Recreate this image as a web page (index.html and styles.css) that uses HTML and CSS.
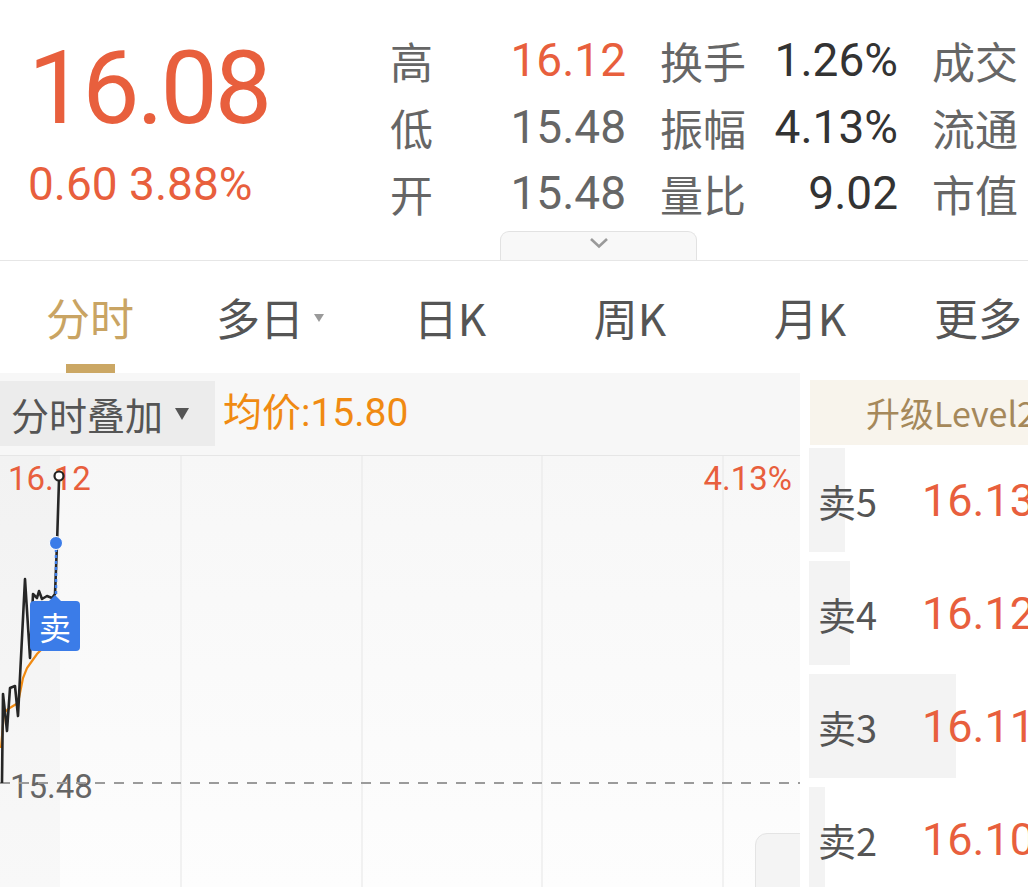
FILE: index.html
```html
<!DOCTYPE html>
<html lang="zh-CN">
<head>
  <meta charset="UTF-8" />
  <meta name="viewport" content="width=device-width, initial-scale=1.0"/>
  <title>分时</title>
  <link rel="stylesheet" href="styles.css">
</head>
<body>
  <section class="quote">
    <div class="quote-main">
      <div class="price-block">
        <div class="last up">16.08</div>
        <div class="change up">0.60 3.88%</div>
      </div>
      <div class="stats">
        <span class="lbl">高</span><span class="val up">16.12</span>
        <span class="lbl pad">换手</span><span class="val dark">1.26%</span>
        <span class="lbl pad">成交</span>

        <span class="lbl">低</span><span class="val">15.48</span>
        <span class="lbl pad">振幅</span><span class="val dark">4.13%</span>
        <span class="lbl pad">流通</span>

        <span class="lbl">开</span><span class="val">15.48</span>
        <span class="lbl pad">量比</span><span class="val dark">9.02</span>
        <span class="lbl pad">市值</span>
      </div>
    </div>
    <div class="expand">
      <svg width="20" height="12" viewBox="0 0 20 12"><path d="M2 2 L10 9.5 L18 2" fill="none" stroke="#9a9a9a" stroke-width="2.6"/></svg>
    </div>
  </section>

  <nav class="tabs">
    <div class="tab active"><span class="tab-label">分时</span></div>
    <div class="tab"><span class="tab-label">多日<i class="caret"></i></span></div>
    <div class="tab"><span class="tab-label">日K</span></div>
    <div class="tab"><span class="tab-label">周K</span></div>
    <div class="tab"><span class="tab-label">月K</span></div>
    <div class="tab last-tab"><span class="tab-label">更多</span></div>
  </nav>

  <main class="main">
    <div class="chart-panel">
      <div class="toolbar">
        <div class="overlay-btn">分时叠加<i class="down"></i></div>
        <div class="avg">均价:15.80</div>
      </div>
      <div class="chart">
        <svg class="chart-svg" width="800" height="432" viewBox="0 0 800 432">
          <rect x="0" y="0" width="60" height="432" fill="rgba(0,0,0,0.018)"/>
          <g stroke="#e9e9e9" stroke-width="1.2">
            <line x1="181" y1="0" x2="181" y2="432"/>
            <line x1="362" y1="0" x2="362" y2="432"/>
            <line x1="542" y1="0" x2="542" y2="432"/>
            <line x1="723" y1="0" x2="723" y2="432"/>
          </g>
          <text x="8" y="34" class="axis up-fill">16.12</text>
          <text x="792" y="34" class="axis up-fill" text-anchor="end">4.13%</text>
          <text x="10" y="342" class="axis gray-fill">15.48</text>
          <line x1="0" y1="327" x2="800" y2="327" stroke="#9b9b9b" stroke-width="2" stroke-dasharray="10 9"/>
          <polyline fill="none" stroke="#f08a12" stroke-width="2.2"
            points="1,292 4,257 8,253 13,250 18,247 23,222 27,212 32,205 37,198 45,190 55,185"/>
          <polyline fill="none" stroke="#262626" stroke-width="2.6" stroke-linejoin="round"
            points="2,327 3,238 7,275 10,232 15,230 18,260 25,123 30,202 33,138 37,142 39,135 42,143 47,140 52,142 55,138 57,88 59,24"/>
          <circle cx="59" cy="20" r="4.5" fill="#fff" stroke="#222" stroke-width="2.2"/>
          <line x1="56" y1="93" x2="56" y2="140" stroke="#3b7ce8" stroke-width="2.5" stroke-dasharray="3 3"/>
          <circle cx="56" cy="87" r="6.5" fill="#3b7ce8" stroke="#fff" stroke-width="1"/>
        </svg>
        <div class="trade-tag">卖</div>
        <div class="float-btn"></div>
      </div>
    </div>

    <aside class="book">
      <div class="level">升级Level2</div>
      <div class="book-row"><span class="depth" style="width:36px"></span><span class="side">卖5</span><span class="bp up">16.13</span></div>
      <div class="book-row"><span class="depth" style="width:41px"></span><span class="side">卖4</span><span class="bp up">16.12</span></div>
      <div class="book-row"><span class="depth" style="width:147px"></span><span class="side">卖3</span><span class="bp up">16.11</span></div>
      <div class="book-row"><span class="depth" style="width:16px"></span><span class="side">卖2</span><span class="bp up">16.10</span></div>
    </aside>
  </main>
</body>
</html>
```

FILE: styles.css
```css
:root {
  --red: #e85f3d;
  --gold: #c9a463;
  --gray: #666;
  --dark: #333;
  --line: #e6e6e6;
  --panel: #f7f7f7;
}
* { box-sizing: border-box; margin: 0; padding: 0; }
body {
  width: 1028px;
  height: 887px;
  overflow: hidden;
  background: #fff;
  font-family: Roboto, "Noto Sans CJK SC", sans-serif;
  color: var(--gray);
}
.up { color: var(--red); }
.dark { color: var(--dark); }

/* header quote */
.quote {
  height: 261px;
  border-bottom: 1px solid var(--line);
  display: flex;
  flex-direction: column;
}
.quote-main {
  display: flex;
  flex: 1;
}
.price-block {
  width: 390px;
  padding: 37px 0 0 28px;
}
.last {
  font-size: 102px;
  line-height: 102px;
  letter-spacing: -3px;
}
.change {
  margin-top: 22px;
  font-size: 46px;
  line-height: 46px;
}
.stats {
  padding-top: 27px;
  display: grid;
  grid-template-columns: 50px 186px 124px 148px 130px;
  grid-auto-rows: 66.5px;
  align-items: center;
}
.lbl {
  font-family: "Noto Sans CJK SC", sans-serif;
  font-size: 43px;
  line-height: 66px;
  color: var(--gray);
  white-space: nowrap;
}
.lbl.pad { padding-left: 34px; }
.val {
  font-size: 46px;
  line-height: 66px;
  text-align: right;
}
.expand {
  margin-left: 500px;
  width: 197px;
  height: 29px;
  border: 1.5px solid #e2e2e2;
  border-bottom: none;
  border-radius: 9px 9px 0 0;
  background: #f8f8f8;
  display: flex;
  justify-content: center;
  padding-top: 5px;
}

/* tabs */
.tabs {
  display: flex;
  height: 112px;
}
.tab {
  width: 180px;
  flex: none;
  display: flex;
  flex-direction: column;
  align-items: center;
  padding-top: 26px;
}
.last-tab { margin-left: -12px; }
.tab-label {
  font-family: "Noto Sans CJK SC", sans-serif;
  font-size: 44px;
  line-height: 60px;
  color: #555;
  display: flex;
  align-items: center;
}
.tab.active .tab-label { color: var(--gold); }
.tab.active::after {
  content: '';
  margin-top: auto;
  width: 49px;
  height: 9px;
  background: #cba764;
}
.caret {
  margin-left: 10px;
  margin-top: 2px;
  border-left: 5px solid transparent;
  border-right: 5px solid transparent;
  border-top: 8px solid #9a9a9a;
}

/* main */
.main {
  display: flex;
  align-items: flex-start;
}
.chart-panel {
  width: 800px;
  height: 514px;
  background: var(--panel);
  flex: none;
}
.toolbar {
  display: flex;
  align-items: center;
  padding-top: 8px;
  height: 73px;
}
.overlay-btn {
  width: 215px;
  height: 65px;
  background: #ececec;
  display: flex;
  align-items: center;
  padding-left: 11px;
  font-family: "Noto Sans CJK SC", sans-serif;
  font-size: 38px;
  color: #555;
}
.down {
  margin-left: 12px;
  border-left: 7px solid transparent;
  border-right: 7px solid transparent;
  border-top: 12px solid #555;
}
.avg {
  margin-left: 8px;
  font-size: 39px;
  color: #f08a12;
}
.avg, .overlay-btn { line-height: 65px; }
.chart {
  position: relative;
  margin-top: 9px;
  height: 432px;
  border-top: 1.5px solid #e6e6e6;
  background: linear-gradient(#f7f7f7, #fdfdfd);
  overflow: hidden;
}
.chart-svg { display: block; }
.axis {
  font-family: Roboto, sans-serif;
  font-size: 33px;
}
.up-fill { fill: var(--red); }
.gray-fill { fill: #666; }
.trade-tag {
  position: absolute;
  left: 30px;
  top: 145px;
  width: 50px;
  height: 50px;
  border-radius: 4px;
  background: #3b7ce8;
  color: #fff;
  font-family: "Noto Sans CJK SC", sans-serif;
  font-size: 32px;
  line-height: 50px;
  text-align: center;
}
.trade-tag::before {
  content: '';
  position: absolute;
  left: 19px;
  top: -6px;
  border-left: 6px solid transparent;
  border-right: 6px solid transparent;
  border-bottom: 6px solid #3b7ce8;
}
.float-btn {
  position: absolute;
  left: 755px;
  top: 377px;
  width: 60px;
  height: 70px;
  border: 1.5px solid #e4e4e4;
  border-radius: 12px 0 0 0;
  background: #f4f4f4;
}

/* order book */
.book {
  width: 220px;
  margin-left: 8px;
  flex: none;
  overflow: hidden;
}
.level {
  margin: 7px 0 0 2px;
  height: 65px;
  background: #f8f4ec;
  padding-left: 56px;
  font-family: "Noto Sans CJK SC", sans-serif;
  font-size: 34px;
  line-height: 65px;
  color: #a5885a;
  white-space: nowrap;
  overflow: hidden;
}
.book-row {
  position: relative;
  height: 104px;
  margin-top: 9px;
  display: flex;
  align-items: center;
  white-space: nowrap;
}
.level + .book-row { margin-top: 3px; }
.depth {
  position: absolute;
  left: 1px;
  top: 0;
  bottom: 0;
  background: #f3f3f3;
}
.side {
  position: relative;
  flex: none;
  margin-left: 10px;
  width: 104px;
  font-family: "Noto Sans CJK SC", sans-serif;
  font-size: 38px;
  color: #555;
}
.bp {
  position: relative;
  flex: none;
  font-size: 45px;
}
```
